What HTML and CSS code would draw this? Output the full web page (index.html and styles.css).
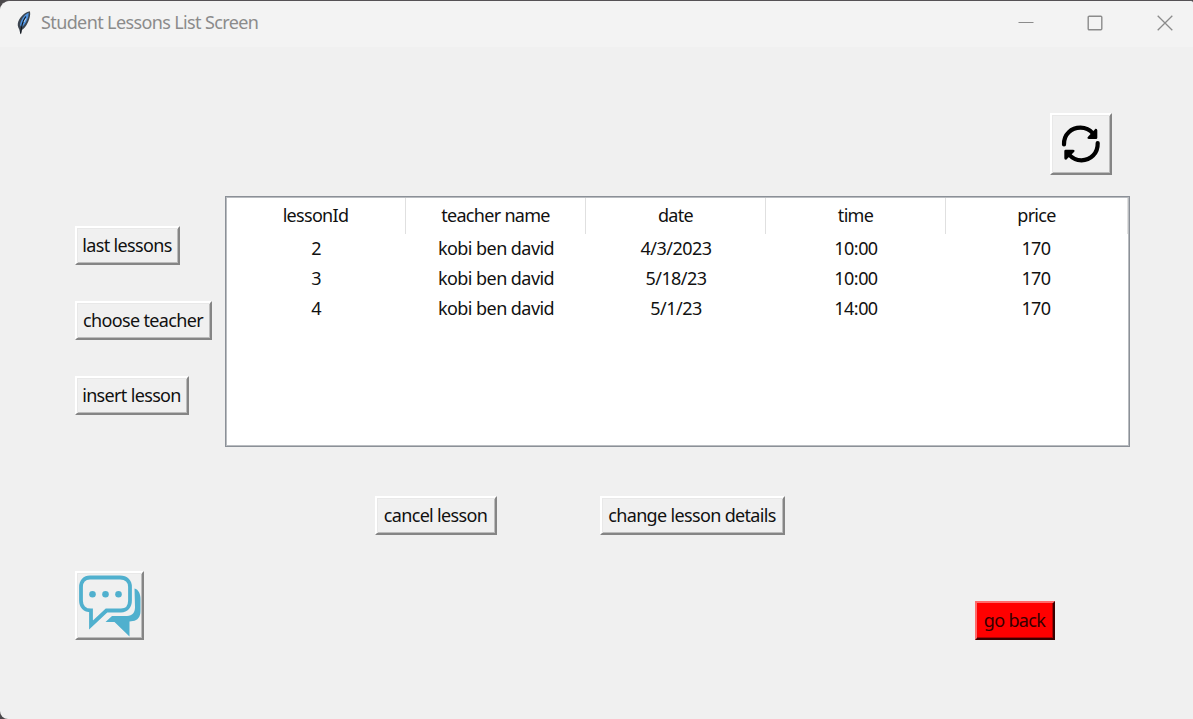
FILE: index.html
```html
<!DOCTYPE html>
<html lang="en">
<head>
<meta charset="utf-8">
<title>Student Lessons List Screen</title>
<link rel="stylesheet" href="styles.css">
</head>
<body>
<div class="window">
  <header class="titlebar">
    <svg class="feather" width="16" height="26" viewBox="0 0 16 26">
      <path d="M13.800 1.200C9 2.200 4.500 6 2.300 11.500C1.200 14.500 1.800 17 3.300 19.500L4.500 24.500L5.800 20C10 17.500 12.200 12.500 13.500 8C14.200 5.500 14.500 3 13.800 1.200Z" fill="#3c4550"/>
      <path d="M12.700 2.800C8.500 4.500 5 9 4 15L5.500 17.500C9.500 14.500 11.200 10 12.200 6.800Z" fill="#4f93e0"/>
      <path d="M9.800 6.500C7 10.500 5.300 15 4.700 23.500" fill="none" stroke="#10151b" stroke-width="1.200"/>
      <path d="M10 8.500L8 12" stroke="#b9d4ee" stroke-width="1"/>
    </svg>
    <span class="title">Student Lessons List Screen</span>
    <div class="controls">
      <svg width="16" height="16" viewBox="0 0 16 16"><path d="M0.500 7.500H15.500" stroke="#8b8b8b"/></svg>
      <svg width="16" height="16" viewBox="0 0 16 16"><rect x="1.200" y="1.200" width="13.600" height="13.600" rx="1" fill="none" stroke="#8b8b8b" stroke-width="1.400"/></svg>
      <svg width="16" height="16" viewBox="0 0 16 16"><path d="M0.700 0.700L15.300 15.300M15.300 0.700L0.700 15.300" stroke="#8b8b8b" stroke-width="1.300"/></svg>
    </div>
  </header>
  <main class="content">
    <div class="toolbar">
      <button class="btn refresh" aria-label="refresh">
        <svg width="56" height="56" viewBox="0 0 56 56">
          <g fill="none" stroke="#000" stroke-width="4.200" stroke-linecap="round">
            <path d="M11 28.500C10.600 18 18.500 11.700 27.500 11.700C33 11.700 37 14 40 17.500"/>
            <path d="M44.700 27C45 37.500 37.500 44.300 28.500 44.300C23 44.300 19 42 16 38.500"/>
          </g>
          <path d="M42.500 12.800Q44.300 12.500 44.300 14.500V21.700Q44.300 23 43 23H36Q33.500 22.700 35 20.800Z"/>
          <path d="M13.200 43.700Q11.300 44 11.300 42V35.200Q11.300 33.800 12.700 33.800H20Q22.500 34.200 21 36Z"/>
        </svg>
      </button>
    </div>
    <div class="lessons">
      <nav class="side">
        <button class="btn last">last lessons</button>
        <button class="btn choose">choose teacher</button>
        <button class="btn insert">insert lesson</button>
      </nav>
      <div class="tree">
        <div class="row head"><span>lessonId</span><span>teacher name</span><span>date</span><span>time</span><span>price</span></div>
        <div class="row"><span>2</span><span>kobi ben david</span><span>4/3/2023</span><span>10:00</span><span>170</span></div>
        <div class="row"><span>3</span><span>kobi ben david</span><span>5/18/23</span><span>10:00</span><span>170</span></div>
        <div class="row"><span>4</span><span>kobi ben david</span><span>5/1/23</span><span>14:00</span><span>170</span></div>
      </div>
    </div>
    <div class="actions">
      <button class="btn cancel">cancel lesson</button>
      <button class="btn change">change lesson details</button>
    </div>
    <footer class="footer">
      <button class="btn chat" aria-label="chat">
        <svg width="64" height="64" viewBox="0 0 64 64">
          <path d="M56.500 14.500C60.500 15.500 62.500 20 62.500 25V37C62.500 43 59.500 46.500 55 47L51.500 47.500V62.500L36.500 48H27.500L34 42H49C54.500 42 57 38.500 57 33Z" fill="#50b0ce"/>
          <path d="M12 3.500H42C48.500 3.500 52 7.500 52 13V26.500C52 32.500 48.500 36.500 43 36.500H28.500L13 51V36.500C6.500 36.500 3 32.500 3 26.500V13C3 7 6.500 3.500 12 3.500Z" fill="#f0f0f0" stroke="#50b0ce" stroke-width="3.800"/>
          <g fill="#50b0ce"><circle cx="14.500" cy="20.200" r="3.300"/><circle cx="27.500" cy="20.200" r="3.300"/><circle cx="40.500" cy="20.200" r="3.300"/></g>
        </svg>
      </button>
      <button class="btn back">go back</button>
    </footer>
  </main>
</div>
</body>
</html>
```
FILE: styles.css
```css
* { box-sizing: border-box; }
body {
  margin: 0;
  background: #4b484b;
  font-family: "Noto Sans", "Open Sans", sans-serif;
  font-size: 18px;
  letter-spacing: -0.7px;
  color: #111;
}
.window {
  width: 1193px;
  height: 719px;
  border-top: 1px solid #555155;
  border-radius: 10px 3px 0 8px;
  background: #f0f0f0;
  overflow: hidden;
}
.titlebar {
  display: flex;
  align-items: center;
  height: 46px;
  padding: 0 20px 3px 16px;
  background: #f3f3f3;
  color: #8b8b8b;
}
.title { margin-left: 9px; padding-bottom: 2px; white-space: nowrap; letter-spacing: -0.62px; }
.controls { display: flex; gap: 54px; margin-left: auto; }
.controls svg:first-child { margin-right: -1px; }
svg { display: block; flex: none; }
.content { display: flex; flex-direction: column; padding: 66px 63px 0 75px; }
.btn {
  display: flex;
  align-items: center;
  justify-content: center;
  height: 39px;
  padding: 0 1px 1px 0;
  border: 2px solid;
  border-color: #fff #858585 #858585 #fff;
  background: #f0f0f0;
  box-shadow: inset 1px 1px #e8e8e8, inset -1px -1px #bcbcbc;
  color: #111;
  font: inherit;
  letter-spacing: -0.66px;
  white-space: nowrap;
}
.toolbar { display: flex; justify-content: flex-end; padding-right: 18px; }
.refresh { width: 62px; height: 62px; padding: 0; }
.lessons { display: flex; margin-top: 21px; }
.side { display: flex; flex-direction: column; gap: 36px; width: 150px; padding-top: 30px; }
.last { width: 105px; }
.choose { width: 137px; }
.insert { width: 114px; }
.tree {
  width: 905px;
  height: 251px;
  border: 1px solid #8b9097;
  box-shadow: inset 0 0 0 1px #b9bcc0;
  padding: 1px 1px 1px 0;
  background: #fff;
}
.row {
  display: grid;
  grid-template-columns: repeat(5, 180px);
  height: 30px;
  line-height: 28px;
  text-align: center;
}
.row:not(.head) { letter-spacing: -0.55px; }
.head { height: 36px; line-height: 34px; }
.head span { border-right: 1px solid #e0e0e0; }
.head span:last-child { margin-right: -2px; }
.actions { display: flex; gap: 103px; margin-top: 49px; padding-left: 300px; }
.cancel { width: 122px; }
.change { width: 185px; }
.footer { display: flex; align-items: flex-end; justify-content: space-between; margin-top: 36px; padding-right: 75px; }
.chat { width: 69px; height: 69px; padding: 0; }
.back {
  width: 80px;
  background: #f00;
  border-color: #ff6b6b #3a0000 #3a0000 #ff6b6b;
  box-shadow: inset -1px -1px #b00000;
  color: #320000;
}
```
